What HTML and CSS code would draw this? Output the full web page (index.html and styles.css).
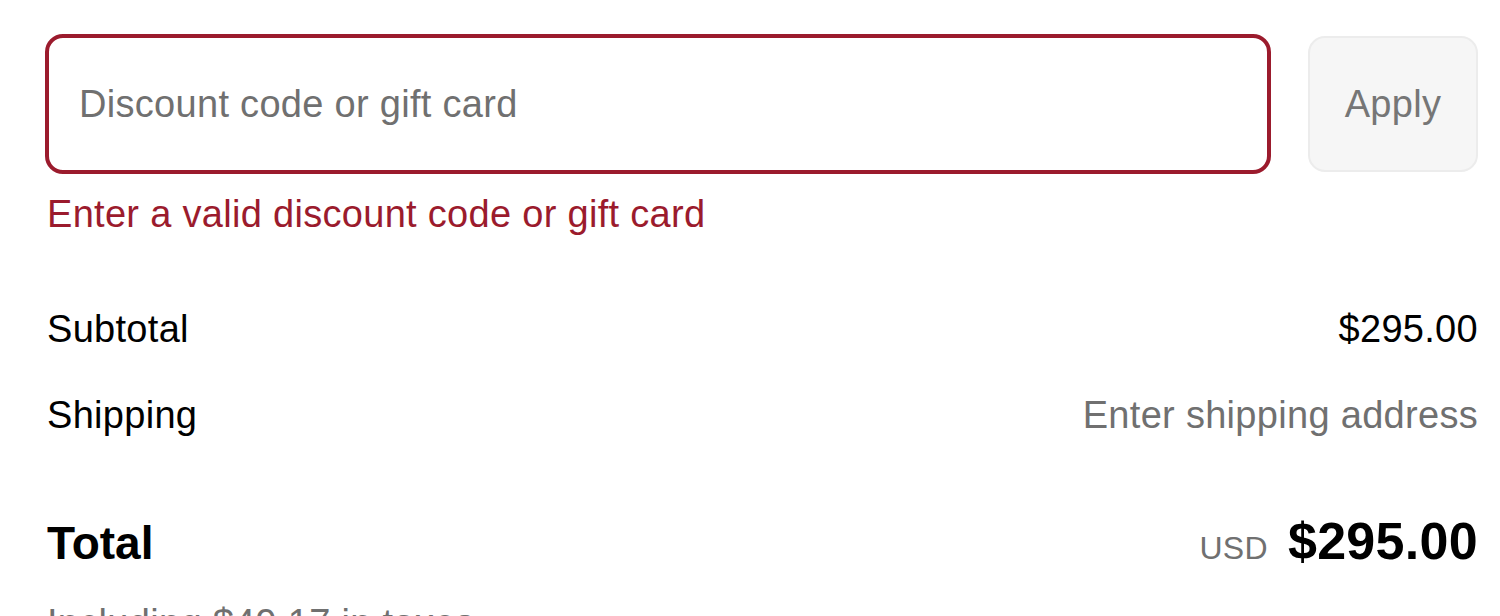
FILE: index.html
```html
<!DOCTYPE html>
<html lang="en">
<head>
    <meta charset="UTF-8">
    <title>Order summary</title>
    <link rel="stylesheet" href="styles.css">
</head>
<body>
    <div class="summary">
        <div class="discount">
            <input type="text" class="code-input" placeholder="Discount code or gift card">
            <button type="button" class="apply-btn">Apply</button>
        </div>
        <div class="error">Enter a valid discount code or gift card</div>

        <div class="line first">
            <span>Subtotal</span>
            <span>$295.00</span>
        </div>
        <div class="line">
            <span>Shipping</span>
            <span class="muted">Enter shipping address</span>
        </div>

        <div class="total">
            <span class="total-label">Total</span>
            <span class="total-price"><span class="currency">USD</span>$295.00</span>
        </div>
        <div class="taxes">Including $49.17 in taxes</div>
    </div>
</body>
</html>
```

FILE: styles.css
```css
body
{
    margin: 0;
    background: #fff;
    font-family: "Liberation Sans", Arial, sans-serif;
    color: #000;
    letter-spacing: 0.3px;
}
.summary
{
    padding: 34px 22px 0 45px;
}
.discount
{
    display: flex;
    gap: 37px;
    height: 140px;
}
.code-input
{
    flex: 1;
    box-sizing: border-box;
    border: solid 4px #9b1b2d;
    border-radius: 18px;
    padding: 0 30px;
    font-family: inherit;
    font-size: 38px;
    letter-spacing: 0.3px;
    color: #000;
    outline: none;
}
.code-input::placeholder
{
    color: #707070;
}
.apply-btn
{
    width: 170px;
    margin: 2px 0;
    border: solid 2px #ececec;
    border-radius: 17px;
    background: #f6f6f6;
    color: #767676;
    font-family: inherit;
    font-size: 38px;
    letter-spacing: 0.3px;
}
.error
{
    margin-top: 17px;
    padding-left: 2px;
    font-size: 38px;
    line-height: 46px;
    color: #9b1b2d;
}
.line
{
    display: flex;
    justify-content: space-between;
    padding-left: 2px;
    font-size: 38px;
    line-height: 46px;
    margin-top: 40px;
}
.line.first
{
    margin-top: 69px;
}
.muted
{
    color: #707070;
}
.total
{
    display: flex;
    justify-content: space-between;
    align-items: baseline;
    padding-left: 2px;
    margin-top: 72px;
    line-height: 62px;
}
.total-label
{
    font-size: 46px;
    font-weight: bold;
    letter-spacing: 0;
}
.total-price
{
    font-size: 52px;
    font-weight: bold;
}
.currency
{
    font-size: 32px;
    font-weight: normal;
    color: #707070;
    margin-right: 20px;
}
.taxes
{
    margin-top: 21px;
    padding-left: 2px;
    font-size: 38px;
    line-height: 46px;
    color: #707070;
}
```
